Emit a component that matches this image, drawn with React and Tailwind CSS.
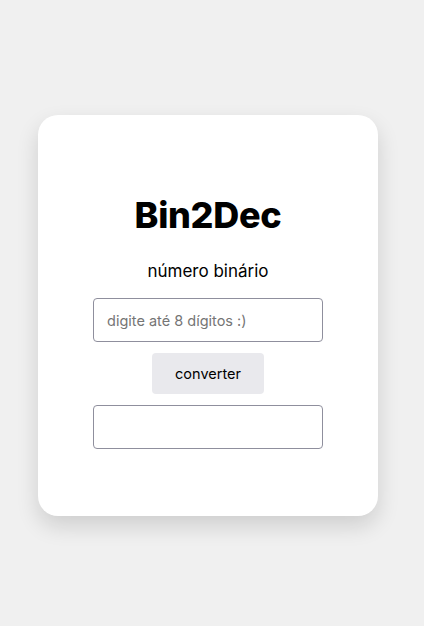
export default function App() {
  return (
    <div className="min-h-[626px] bg-[#f0f0f0] pt-[115px] font-['Inter',sans-serif]">
      <div className="ml-[38px] w-[340px] h-[401px] bg-white rounded-[20px] shadow-[0_10px_22px_rgba(0,0,0,0.14)] flex flex-col items-center pt-[80px]">
        <h1 className="text-[36px] leading-[40px] font-extrabold tracking-[-0.3px] text-black">Bin2Dec</h1>
        <label className="mt-[24px] text-[17px] leading-[24px] text-black">número binário</label>
        <input
          type="text"
          placeholder="digite até 8 dígitos :)"
          className="mt-[15px] w-[230px] h-[44px] border border-[#8f8f9d] rounded-[4px] px-[13px] text-[14.5px] text-black placeholder:text-[#757575] outline-none"
        />
        <button className="mt-[11px] w-[112px] h-[41px] bg-[#e9e9ed] rounded-[4px] text-[14.5px] text-black">
          converter
        </button>
        <input
          type="text"
          readOnly
          className="mt-[11px] w-[230px] h-[44px] border border-[#8f8f9d] rounded-[4px] px-[13px] text-[14.5px] text-black outline-none"
        />
      </div>
    </div>
  );
}
